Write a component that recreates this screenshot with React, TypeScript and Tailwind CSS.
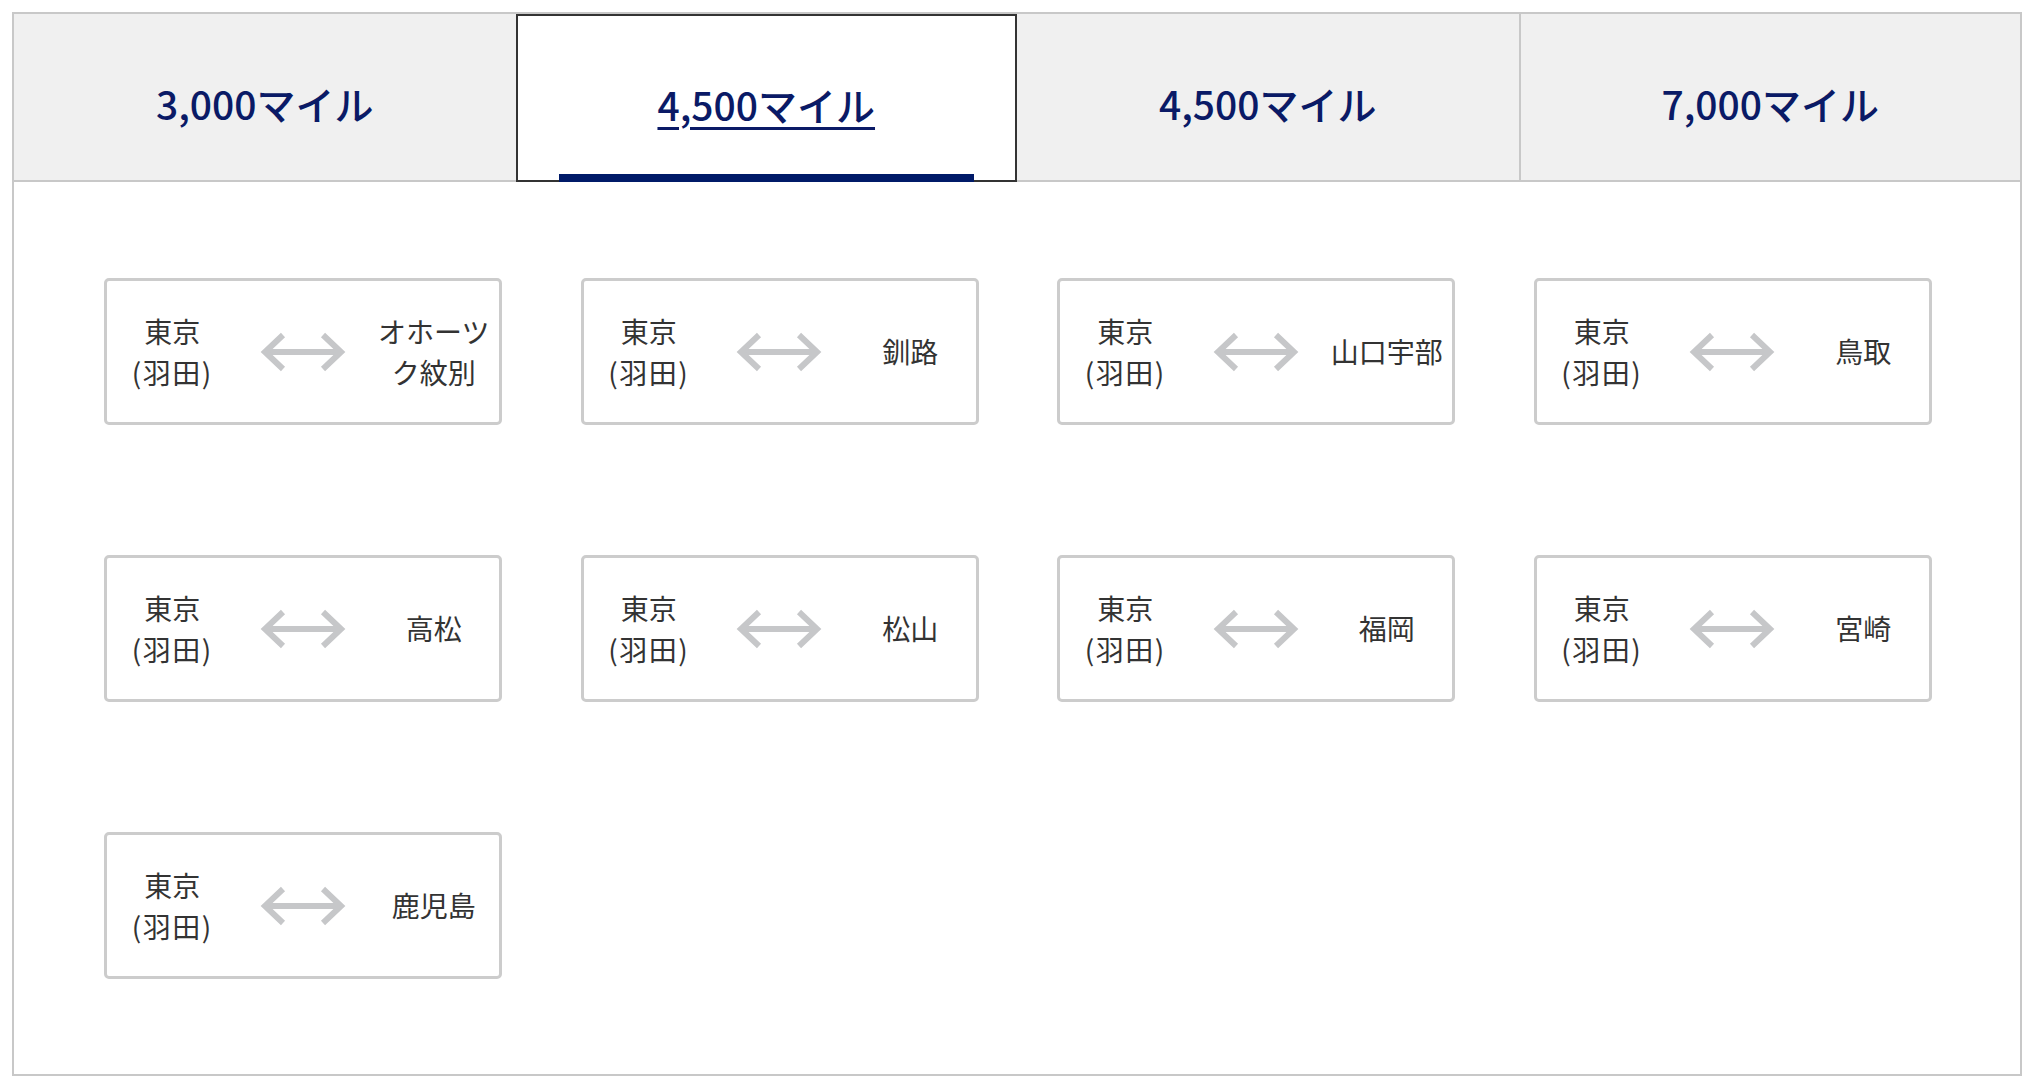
import React from "react";

const tabs = [
  { label: "3,000マイル", active: false },
  { label: "4,500マイル", active: true },
  { label: "4,500マイル", active: false },
  { label: "7,000マイル", active: false },
];

const routes: string[] = [
  "オホーツク紋別",
  "釧路",
  "山口宇部",
  "鳥取",
  "高松",
  "松山",
  "福岡",
  "宮崎",
  "鹿児島",
];

function Arrow() {
  return (
    <svg width="86" height="42" viewBox="0 0 86 42" fill="none" className="blur-[0.4px]">
      <path d="M5 21 H81" stroke="#c6c7c9" strokeWidth="6" />
      <path d="M23 4 L5 21 L23 38" stroke="#c6c7c9" strokeWidth="6" strokeLinejoin="miter" />
      <path d="M63 4 L81 21 L63 38" stroke="#c6c7c9" strokeWidth="6" strokeLinejoin="miter" />
    </svg>
  );
}

function Card({ dest }: { dest: string }) {
  return (
    <div className="h-[147px] rounded-[5px] border-[3px] border-[#cccccc] bg-white grid grid-cols-3 items-center text-center text-[#333333] text-[28px] leading-[41px]">
      <div className="flex flex-col items-center">
        <span>東京</span>
        <span className="tracking-[1.5px]">(羽田)</span>
      </div>
      <div className="flex justify-center">
        <Arrow />
      </div>
      <div className="px-[6px]">{dest}</div>
    </div>
  );
}

export default function App() {
  return (
    <div
      className="w-[2034px] h-[1088px] bg-white p-[12px]"
      style={{ fontFamily: '"Noto Sans CJK JP", "Noto Sans", sans-serif' }}
    >
      <div className="h-full border-2 border-[#c8c8c8] flex flex-col">
        <div className="grid grid-cols-4 h-[168px]">
          {tabs.map((t, i) =>
            t.active ? (
              <div
                key={i}
                className="relative bg-white border-2 border-[#333333] flex items-center justify-center pt-[12px]"
              >
                <span className="text-[39px] font-medium text-[#0a1a66] underline decoration-[3px] underline-offset-[6px]">
                  {t.label}
                </span>
                <div className="absolute left-[41px] right-[41px] bottom-[-2px] h-[8px] bg-[#001a68]" />
              </div>
            ) : (
              <div
                key={i}
                className={`bg-[#f0f0f0] border-b-2 border-[#c8c8c8] flex items-center justify-center pt-[12px] ${
                  i === 3 ? "border-l-2" : ""
                }`}
              >
                <span className="text-[39px] font-medium text-[#0a1a66]">{t.label}</span>
              </div>
            )
          )}
        </div>
        <div className="flex-1 pl-[90px] pt-[96px]">
          <div className="grid grid-cols-[repeat(4,398px)] gap-x-[78.5px] gap-y-[130px]">
            {routes.map((r, i) => (
              <Card key={i} dest={r} />
            ))}
          </div>
        </div>
      </div>
    </div>
  );
}
